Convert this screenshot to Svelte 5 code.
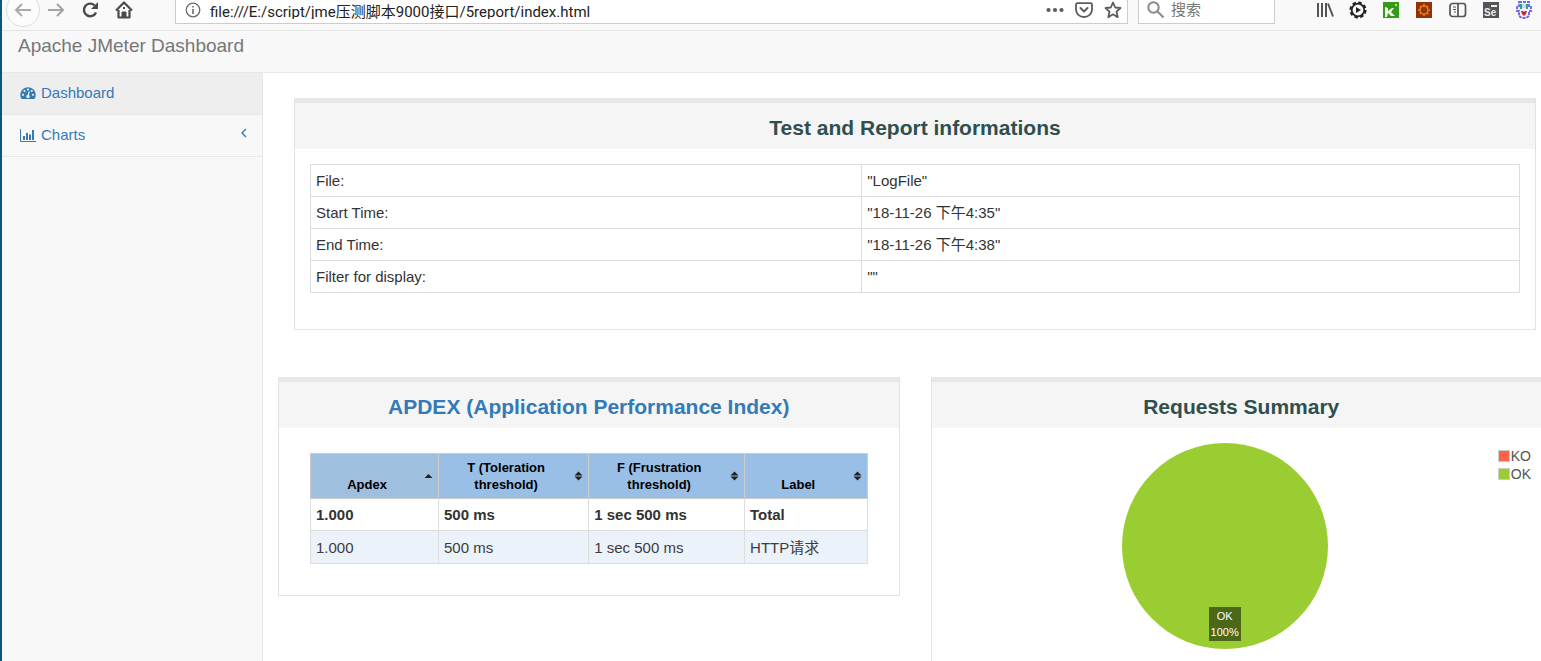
<script lang="ts">
	const url: string = 'file:///E:/script/jme压测脚本9000接口/5report/index.html';

	const infos = [
		{ name: 'File:', value: '"LogFile"' },
		{ name: 'Start Time:', value: '"18-11-26 下午4:35"' },
		{ name: 'End Time:', value: '"18-11-26 下午4:38"' },
		{ name: 'Filter for display:', value: '""' }
	];

	const columns = [
		{ title: 'Apdex', width: 23 },
		{ title: 'T (Toleration threshold)', width: 27 },
		{ title: 'F (Frustration threshold)', width: 28 },
		{ title: 'Label', width: 22 }
	];

	const total = ['1.000', '500 ms', '1 sec 500 ms', 'Total'];
	const rows = [['1.000', '500 ms', '1 sec 500 ms', 'HTTP请求']];

	let sorted = $state(0);
	let query = $state('');
	let address = $state(url);
</script>

<div class="window">
	<header class="toolbar">
		<div class="nav-buttons">
			<button class="back" aria-label="Back">
				<svg width="20" height="20" viewBox="0 0 20 20" fill="none" stroke="#aaa" stroke-width="2"><path d="M18 10H3M9 4L3 10l6 6" /></svg>
			</button>
			<button aria-label="Forward">
				<svg width="20" height="20" viewBox="0 0 20 20" fill="none" stroke="#a3a3a3" stroke-width="2"><path d="M2 10h15M11 4l6 6-6 6" /></svg>
			</button>
			<button aria-label="Reload">
				<svg width="20" height="20" viewBox="0 0 20 20" fill="none" stroke="#4a4a4a" stroke-width="2.4"><path d="M16 12.500A6.300 6.300 0 1 1 14.500 5.300" /><path d="M18 2v7h-7z" fill="#4a4a4a" stroke="none" /></svg>
			</button>
			<button aria-label="Home">
				<svg width="20" height="20" viewBox="0 0 20 20" fill="none" stroke="#4a4a4a" stroke-width="2.2" stroke-linejoin="round"><path d="M2 10.500L10 2.500l8 8" /><path d="M4.500 10v7.500h11V10" /><path d="M8 17.500V12h4v5.500z" fill="#4a4a4a" stroke-width="1" /><path d="M9 8h2" /></svg>
			</button>
		</div>

		<div class="urlbar">
			<svg width="16" height="16" viewBox="0 0 16 16" fill="none" stroke="#6b6b6b"><circle cx="8" cy="8" r="6.800" stroke-width="1.300" /><path d="M8 7v5M8 4v1.600" stroke-width="1.600" /></svg>
			<input aria-label="Address" bind:value={address} />
			<button aria-label="Page actions">
				<svg width="20" height="20" viewBox="0 0 20 20" fill="#5c5c5c"><circle cx="3.500" cy="10" r="2.100" /><circle cx="10" cy="10" r="2.100" /><circle cx="16.500" cy="10" r="2.100" /></svg>
			</button>
			<button aria-label="Save to Pocket">
				<svg width="20" height="20" viewBox="0 0 20 20" fill="none" stroke="#5c5c5c" stroke-width="1.800" stroke-linejoin="round" stroke-linecap="round"><path d="M3.500 3.200h13q1.500 0 1.500 1.500V9.500a8 7.500 0 0 1-16 0V4.700q0-1.500 1.500-1.500z" /><path d="M6.500 8l3.500 3.500L13.500 8" stroke-width="2" /></svg>
			</button>
			<button aria-label="Bookmark this page">
				<svg width="20" height="20" viewBox="0 0 20 20" fill="none" stroke="#5c5c5c" stroke-width="1.800" stroke-linejoin="round"><path d="M10 2.500l2.200 5 5.300.5-4 3.700 1.200 5.500L10 14.300l-4.700 2.900 1.200-5.500-4-3.700 5.300-.5z" /></svg>
			</button>
		</div>

		<div class="search">
			<svg width="18" height="18" viewBox="0 0 18 18" fill="none" stroke="#8a8a8a" stroke-width="2"><circle cx="6.500" cy="6.500" r="5.200" /><path d="M10.500 10.500l6 6" /></svg>
			<input aria-label="Search" placeholder="搜索" bind:value={query} />
		</div>

		<div class="extensions">
			<button aria-label="Library">
				<svg width="18" height="18" viewBox="0 0 18 18" fill="none" stroke="#555" stroke-width="2"><path d="M2 2v14M6 2v14M10 2v14" /><path d="M12 2.500L17 15.500" /></svg>
			</button>
			<button aria-label="Recorder">
				<svg width="18" height="18" viewBox="0 0 18 18"><circle cx="9" cy="9" r="7.600" fill="none" stroke="#222" stroke-width="2" stroke-dasharray="3.600 2.370" /><circle cx="9" cy="9" r="6.300" fill="none" stroke="#222" stroke-width="1.800" /><path d="M7 6l5 3-5 3z" fill="#222" /></svg>
			</button>
			<button aria-label="Katalon">
				<svg width="18" height="18" viewBox="0 0 18 18"><path d="M1 1h16v16H1z" fill="#359a17" /><path d="M3 6l3 1v3l4-3h2l-3 4 4 4H9l-3-3-1 4H3z" fill="#eefae8" /><circle cx="14" cy="4" r="1.300" fill="#a0e05c" /></svg>
			</button>
			<button aria-label="Debugger">
				<svg width="18" height="18" viewBox="0 0 18 18"><path d="M1 1h16v16H1z" fill="#8f3405" /><circle cx="9" cy="9" r="4" fill="none" stroke="#e97a19" stroke-width="1.600" /><path d="M9 3v2M9 13v2M3 9h2M13 9h2M5 5l1.300 1.300M12 12l1.300 1.300M13 5l-1.300 1.300M5 13l1.300-1.300" stroke="#e97a19" stroke-width="1.600" /></svg>
			</button>
			<button aria-label="Sidebars">
				<svg width="18" height="18" viewBox="0 0 18 18" fill="none" stroke="#555" stroke-width="1.700"><rect x="1" y="2.500" width="15.500" height="13" rx="2.500" /><path d="M9 2.500v13" /><path d="M4 6h3M4 8.500h3M5 11h2" stroke-width="1" /></svg>
			</button>
			<button aria-label="Selenium IDE">
				<svg width="18" height="18" viewBox="0 0 18 18"><path d="M1 1h16v16H1z" fill="#555" /><path d="M9 4h6v2H9z" fill="#eee" /><text x="2" y="15" font-size="10" font-weight="bold" fill="#eee">Se</text></svg>
			</button>
			<button aria-label="Extension">
				<svg width="18" height="18" viewBox="0 0 18 18"><path d="M4 1h10v4h2v5h-2v5l-3 2H7l-3-2v-5H2V5h2z" fill="#f3efff" stroke="#7468ec" stroke-width="2" stroke-dasharray="3 1" /><path d="M6 3v5M12 3v5" stroke="#29a17b" stroke-width="2" /><path d="M8 3v4M10 3v4" stroke="#8bd5c0" /><path d="M6 10h2l1 1 1-1h2l-1 3-2 2-2-2z" fill="#d41f32" /></svg>
			</button>
		</div>
	</header>

	<nav class="navbar">
		<a class="brand" href="#top">Apache JMeter Dashboard</a>
	</nav>

	<div class="wrapper">
		<aside class="sidebar">
			<a class="item active" href="#dashboard">
				<svg width="16" height="16" viewBox="0 0 16 16"><path d="M1.500 14A7.700 7.700 0 1 1 14.500 14z" fill="#337ab7" /><g fill="#eee"><circle cx="3" cy="9.800" r="1.100" /><circle cx="4.500" cy="6" r="1.100" /><circle cx="8" cy="4.500" r="1.100" /><circle cx="11.700" cy="6" r="1.100" /><circle cx="13" cy="9.800" r="1.100" /><circle cx="8" cy="11.500" r="1.700" /></g><path d="M8 11.500L9.200 6.500" stroke="#eee" stroke-width="1.200" /></svg>
				Dashboard
			</a>
			<a class="item" href="#charts">
				<svg width="16" height="16" viewBox="0 0 16 16" fill="none" stroke="#337ab7"><path d="M.5 2v12.500H16" /><path d="M4 9v4M7 6v7M10 7.500V13M13 3v10" stroke-width="2" /></svg>
				Charts
				<svg class="arrow" width="6" height="10" viewBox="0 0 6 10" fill="none" stroke="#337ab7" stroke-width="1.400"><path d="M5 1L1 5l4 4" /></svg>
			</a>
		</aside>

		<main class="page">
			<section class="panel info">
				<h2>Test and Report informations</h2>
				<table class="info-table">
					<tbody>
						{#each infos as info}
							<tr>
								<td class="name">{info.name}</td>
								<td>{info.value}</td>
							</tr>
						{/each}
					</tbody>
				</table>
			</section>

			<div class="row">
				<section class="panel apdex">
					<h2><a href="#apdex">APDEX (Application Performance Index)</a></h2>
					<table class="sorter">
						<colgroup>
							{#each columns as column}
								<col style="width:{column.width}%" />
							{/each}
						</colgroup>
						<thead>
							<tr>
								{#each columns as column, i}
									<th class:sorted={sorted === i}>
										<button onclick={() => (sorted = i)}>
											<span>{column.title}</span>
											<svg width="9" height="10" viewBox="0 0 9 10" fill="#222">
												{#if sorted === i}
													<path d="M0.500 7l4-4 4 4z" />
												{:else}
													<path d="M.5 4.500l4-4 4 4zM.5 5.500h8l-4 4z" />
												{/if}
											</svg>
										</button>
									</th>
								{/each}
							</tr>
						</thead>
						<tbody>
							<tr class="total">
								{#each total as cell}
									<td>{cell}</td>
								{/each}
							</tr>
							{#each rows as row}
								<tr class="even">
									{#each row as cell}
										<td>{cell}</td>
									{/each}
								</tr>
							{/each}
						</tbody>
					</table>
				</section>

				<section class="panel summary">
					<h2>Requests Summary</h2>
					<div class="chart">
						<div class="plot">
							<svg width="208" height="208" viewBox="0 0 208 208"><circle cx="104" cy="104" r="103" fill="#9acd32" /></svg>
							<div class="pie-label">OK<br />100%</div>
						</div>
						<ul class="legend">
							<li><i class="ko"></i>KO</li>
							<li><i class="ok"></i>OK</li>
						</ul>
					</div>
				</section>
			</div>
		</main>
	</div>
</div>

<style>
	:global(body) {
		overflow: hidden;
		background: #fff;
	}

	.window {
		min-height: 100vh;
		box-sizing: border-box;
		display: flex;
		flex-direction: column;
		border-left: 2px solid #0d5585;
		font-family: "Liberation Sans", "Noto Sans CJK SC", sans-serif;
		font-size: 15px;
		line-height: 20px;
		color: #333;
	}

	button {
		border: 0;
		padding: 0;
		background: none;
		font: inherit;
		color: inherit;
		display: flex;
		align-items: center;
		justify-content: center;
	}

	input {
		border: 0;
		padding: 0;
		outline: 0;
		min-width: 0;
		flex: 1;
		background: none;
		font-family: Roboto, "Noto Sans CJK SC", sans-serif;
		font-size: 15px;
		color: #222;
	}

	input::placeholder {
		color: #777;
		opacity: 1;
	}

	a {
		color: #337ab7;
		text-decoration: none;
	}

	svg {
		flex: none;
		display: block;
	}

	/* browser toolbar */
	.toolbar {
		display: flex;
		height: 30px;
		overflow: hidden;
		background: #f9f9fa;
		border-bottom: 1px solid #e4e4e4;
	}

	.nav-buttons {
		display: flex;
		align-items: center;
		height: 20px;
		width: 173px;
		gap: 14px;
		padding-left: 4px;
		box-sizing: border-box;
	}

	.nav-buttons .back {
		width: 34px;
		height: 34px;
		box-sizing: border-box;
		border: 1px solid #ddd;
		border-radius: 50%;
		background: #fcfcfc;
		margin-right: -8px;
	}

	.urlbar,
	.search {
		display: flex;
		align-items: center;
		height: 24px;
		box-sizing: border-box;
		padding-bottom: 3px;
		background: #fff;
		border: 1px solid #ccc;
		border-top: 0;
	}

	.urlbar {
		flex: 1;
		gap: 9px;
		padding-left: 9px;
		padding-right: 4px;
	}

	.search {
		width: 137px;
		margin-left: 10px;
		padding-left: 8px;
		gap: 6px;
	}

	.extensions {
		display: flex;
		align-items: center;
		justify-content: space-between;
		height: 20px;
		width: 217px;
		margin-left: 41px;
		margin-right: 8px;
	}

	/* report header and side menu */
	.navbar {
		height: 41px;
		background: #f8f8f8;
		border-bottom: 1px solid #e7e7e7;
	}

	.brand {
		display: block;
		padding: 5px 16px;
		font-size: 19px;
		color: #777;
	}

	.wrapper {
		flex: 1;
		display: flex;
	}

	.sidebar {
		width: 260px;
		flex: none;
		background: #f8f8f8;
		border-right: 1px solid #e7e7e7;
	}

	.item {
		display: flex;
		align-items: center;
		gap: 5px;
		box-sizing: border-box;
		height: 42px;
		padding: 0 15px 1px 18px;
		border-bottom: 1px solid #e7e7e7;
	}

	.item.active {
		background: #eee;
	}

	.arrow {
		margin-left: auto;
		margin-bottom: 4px;
	}

	.page {
		flex: 1;
		min-width: 0;
		padding-top: 25px;
	}

	/* panels */
	.panel {
		box-sizing: border-box;
		border: 1px solid #e2e2e2;
		border-top: 5px solid #e7e7e7;
		background: #fff;
	}

	.panel h2 {
		margin: 0;
		padding: 13px 0 9px;
		font-size: 21px;
		line-height: 24px;
		text-align: center;
		color: #2f4f4f;
		background: #f5f5f5;
	}

	.panel.info {
		margin: 0 5px 47px 31px;
		padding-bottom: 36px;
	}

	.panel.info h2 {
		margin-bottom: 15px;
	}

	table {
		border-collapse: collapse;
	}

	.info-table {
		width: calc(100% - 30px);
		margin: 0 15px;
	}

	td {
		border: 1px solid #ddd;
		padding: 5px;
		height: 21px;
		line-height: 21px;
	}

	.name {
		width: 45.6%;
	}

	/* the second row runs a little past the right edge */
	.row {
		display: grid;
		grid-template-columns: 1fr 1fr;
		gap: 31px;
		margin: 0 -11px 0 15px;
		align-items: start;
	}

	.apdex {
		padding-bottom: 31px;
	}

	.sorter {
		width: calc(100% - 62px);
		margin: 25px 31px 0;
		table-layout: fixed;
	}

	th {
		height: 44px;
		padding: 0 5px;
		border: 1px solid #cdcdcd;
		background: #99bfe6;
		color: #000;
		font-size: 13px;
		line-height: 17px;
	}

	th.sorted {
		background: #9fbfdf;
	}

	th button {
		width: 100%;
		height: 34px;
	}

	th span {
		flex: 1;
		align-self: flex-end;
		padding: 0 12px 0 6px;
	}

	.total {
		font-weight: bold;
	}

	.even td {
		height: 22px;
		background: #ebf2fa;
		color: #3d3d3d;
	}

	.chart {
		display: flex;
		padding: 14px 20px;
	}

	.plot {
		position: relative;
		flex: 1;
		display: flex;
		justify-content: center;
	}

	.pie-label {
		position: absolute;
		bottom: 9px;
		padding: 1px 2px;
		background: #4d6719;
		color: #fff;
		font-size: 11px;
		line-height: 16px;
		text-align: center;
	}

	.legend {
		list-style: none;
		margin: 5px 0 0;
		padding: 0;
		font-size: 14px;
		line-height: 18px;
		color: #545454;
	}

	.legend li {
		display: flex;
		align-items: center;
		gap: 1px;
	}

	.legend i {
		width: 10px;
		height: 10px;
		border: 1px solid #ccc;
	}

	.ko {
		background: #ff6347;
	}

	.ok {
		background: #9acd32;
	}
</style>
